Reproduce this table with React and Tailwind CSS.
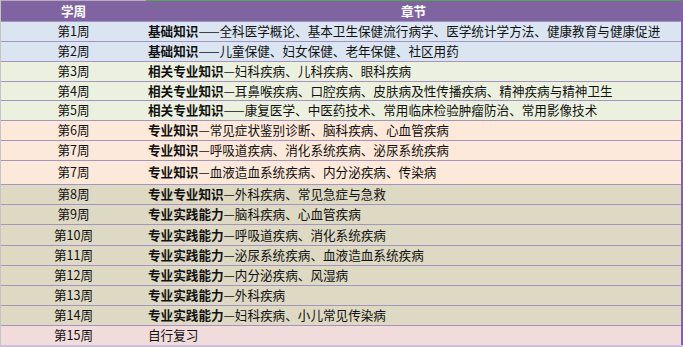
import React from "react";

const rows = [
  { w: "第1周", b: "基础知识", t: "——全科医学概论、基本卫生保健流行病学、医学统计学方法、健康教育与健康促进", bg: "bg-[#dbe5f1]", h: "h-[20px]" },
  { w: "第2周", b: "基础知识", t: "——儿童保健、妇女保健、老年保健、社区用药", bg: "bg-[#dbe5f1]", h: "h-[20px]" },
  { w: "第3周", b: "相关专业知识", t: "—妇科疾病、儿科疾病、眼科疾病", bg: "bg-[#ebf1de]", h: "h-[20px]" },
  { w: "第4周", b: "相关专业知识", t: "—耳鼻喉疾病、口腔疾病、皮肤病及性传播疾病、精神疾病与精神卫生", bg: "bg-[#ebf1de]", h: "h-[19px]" },
  { w: "第5周", b: "相关专业知识", t: "——康复医学、中医药技术、常用临床检验肿瘤防治、常用影像技术", bg: "bg-[#ebf1de]", h: "h-[20px]" },
  { w: "第6周", b: "专业知识", t: "—常见症状鉴别诊断、脑科疾病、心血管疾病", bg: "bg-[#fde9d9]", h: "h-[20px]" },
  { w: "第7周", b: "专业知识", t: "—呼吸道疾病、消化系统疾病、泌尿系统疾病", bg: "bg-[#fde9d9]", h: "h-[20px]" },
  { w: "第7周", b: "专业知识", t: "—血液造血系统疾病、内分泌疾病、传染病", bg: "bg-[#fde9d9]", h: "h-[24px]" },
  { w: "第8周", b: "专业专业知识", t: "—外科疾病、常见急症与急救", bg: "bg-[#ddd9c3]", h: "h-[20px]" },
  { w: "第9周", b: "专业实践能力", t: "—脑科疾病、心血管疾病", bg: "bg-[#ddd9c3]", h: "h-[20px]" },
  { w: "第10周", b: "专业实践能力", t: "—呼吸道疾病、消化系统疾病", bg: "bg-[#ddd9c3]", h: "h-[21px]" },
  { w: "第11周", b: "专业实践能力", t: "—泌尿系统疾病、血液造血系统疾病", bg: "bg-[#ddd9c3]", h: "h-[20px]" },
  { w: "第12周", b: "专业实践能力", t: "—内分泌疾病、风湿病", bg: "bg-[#ddd9c3]", h: "h-[20px]" },
  { w: "第13周", b: "专业实践能力", t: "—外科疾病", bg: "bg-[#ddd9c3]", h: "h-[20px]" },
  { w: "第14周", b: "专业实践能力", t: "—妇科疾病、小儿常见传染病", bg: "bg-[#ddd9c3]", h: "h-[20px]" },
  { w: "第15周", b: "", t: "自行复习", bg: "bg-[#f2dcdb]", h: "h-[20px]" },
];

export default function App() {
  return (
    <div
      className="w-[683px] h-[347px] overflow-hidden bg-[#cdbfdb] text-[12.6px] leading-none text-[#111]"
      style={{ fontFamily: '"Noto Sans CJK SC", "Noto Sans", sans-serif' }}
    >
      <div className="flex flex-col border-l border-[#c4c4c4] border-r-2 border-r-[#8064a2]">
        <div className="flex h-[1px]">
          <div className="w-[145px] bg-[#b8aabf]" />
          <div className="flex-1 bg-[#4fa84f]" />
        </div>
        <div className="grid grid-cols-[145px_1fr] h-[20px] bg-[#8064a2] text-white font-bold items-center">
          <div className="text-center">学周</div>
          <div className="text-center">章节</div>
        </div>
        {rows.map((r, i) => (
          <div
            key={i}
            className={`grid grid-cols-[145px_1fr] items-center border-t border-[#a593c2] ${r.bg} ${r.h}`}
          >
            <div className="text-center">{r.w}</div>
            <div className="pl-[2px] whitespace-nowrap">
              {r.b && <span className="font-bold">{r.b}</span>}
              {r.t}
            </div>
          </div>
        ))}
      </div>
    </div>
  );
}
